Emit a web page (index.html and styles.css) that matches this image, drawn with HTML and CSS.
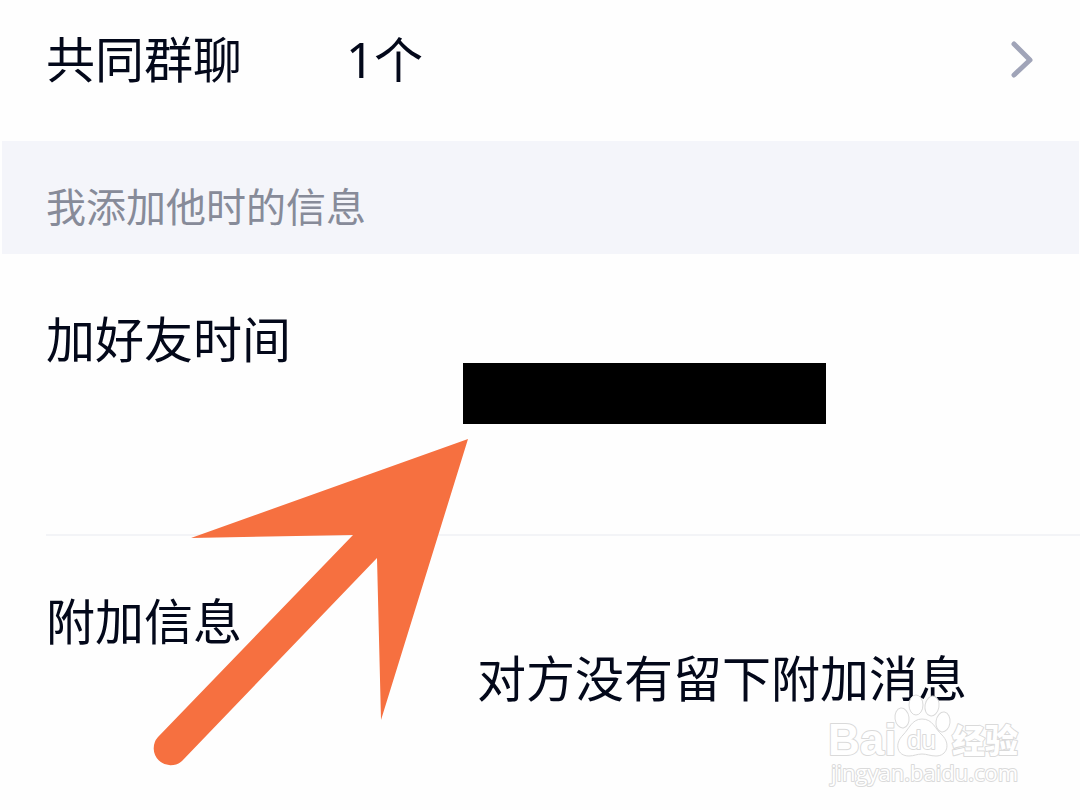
FILE: index.html
```
<!DOCTYPE html>
<html lang="zh-CN">
<head>
<meta charset="utf-8">
<meta name="viewport" content="width=device-width, initial-scale=1">
<title>共同群聊</title>
<link rel="stylesheet" href="styles.css">
</head>
<body>
<main class="page">
  <a class="row row-groups" href="#groups">
    <span class="label">共同群聊</span>
    <span class="count">1个</span>
    <svg class="chevron" width="24" height="40" viewBox="0 0 24 40" aria-hidden="true"><path d="M4 6 20 22 4 37"/></svg>
  </a>
  <h2 class="section-title">我添加他时的信息</h2>
  <dl class="details">
    <div class="row row-time">
      <dt class="label">加好友时间</dt>
      <dd class="value"><span class="redacted"></span></dd>
    </div>
    <div class="row row-note">
      <dt class="label">附加信息</dt>
      <dd class="value note">对方没有留下附加消息</dd>
    </div>
  </dl>
  <svg class="arrow" width="316" height="330" viewBox="0 0 316 330" aria-hidden="true">
    <path d="M316 0 39 99 201 96 6 298A17 17 0 0 0 30 322L225 119 229 281Z"/>
  </svg>
  <svg class="watermark" width="204" height="100" viewBox="0 0 204 100" role="img" aria-label="Baidu 经验">
    <text class="mark-latin" x="4" y="60">Bai</text>
    <g class="paw">
      <ellipse cx="78" cy="23" rx="7" ry="10" transform="rotate(-8 78 23)"/>
      <ellipse cx="92" cy="10" rx="7" ry="10"/>
      <ellipse cx="108" cy="11" rx="7" ry="10" transform="rotate(10 108 11)"/>
      <ellipse cx="119" cy="27" rx="7" ry="10" transform="rotate(8 119 27)"/>
      <path d="M98 24C109 24 111 34 118 40C127 49 123 61 112 61C106 61 103 59 98 59C93 59 90 61 85 61C73 61 70 49 79 40C85 34 88 24 98 24Z"/>
    </g>
    <text class="mark-du" x="83" y="54">du</text>
    <text class="mark-cjk" x="128" y="58">经验</text>
    <text class="mark-url" x="7" y="86">jingyan.baidu.com</text>
  </svg>
</main>
</body>
</html>
```
FILE: styles.css
```
* { box-sizing: border-box; }
body {
  margin: 0;
  background: #fefefe;
  color: #03081a;
  font-family: "Noto Sans CJK SC", sans-serif;
  font-size: 49px;
  line-height: 60px;
}
.page {
  position: relative;
  min-height: 100vh;
  overflow: hidden;
}
.row {
  display: flex;
  padding-left: 46px;
}
.row-groups {
  align-items: baseline;
  padding-top: 27px;
  padding-bottom: 52px;
  padding-right: 46px;
  color: inherit;
  text-decoration: none;
}
.label {
  flex: none;
  width: 300px;
  font-weight: 400;
}
.count {
  height: 60px;
  font-family: "Noto Sans", "Noto Sans CJK SC", sans-serif;
}
.chevron {
  align-self: center;
  margin-left: auto;
  fill: none;
  stroke: #a0a4b8;
  stroke-width: 5;
  stroke-linecap: round;
  stroke-linejoin: round;
}
.section-title {
  margin: 0 1px 0 2px;
  padding: 34px 44px 19px;
  background: #f4f5fa;
  color: #878b99;
  font-size: 40px;
  font-weight: 400;
}
.details { margin: 0; }
.value { margin: 0; }
.row-time {
  margin-left: 46px;
  padding: 53px 0 110px;
  border-bottom: 2px solid #f3f4f7;
}
.row-time .value { padding: 56px 0 0 117px; }
.redacted {
  display: block;
  width: 363px;
  height: 61px;
  background: #000;
}
.row-note { padding-top: 53px; }
.note { padding: 57px 0 0 131px; }
.arrow {
  position: absolute;
  left: 152px;
  top: 439px;
  fill: #f67040;
}
.watermark {
  position: absolute;
  left: 824px;
  top: 695px;
  overflow: visible;
  fill: #fff;
  stroke: #dadada;
  stroke-width: 2;
}
.watermark text {
  paint-order: stroke;
  stroke-linejoin: round;
}
.mark-latin {
  font-family: "Liberation Sans", Arial, sans-serif;
  font-size: 44px;
  font-weight: 700;
}
.paw { stroke-width: 1; }
.mark-du {
  font-family: "Liberation Sans", Arial, sans-serif;
  font-size: 26px;
}
.mark-cjk {
  font-size: 33px;
  font-weight: 900;
}
.mark-url {
  font-family: "Open Sans", sans-serif;
  font-size: 22px;
}
```
